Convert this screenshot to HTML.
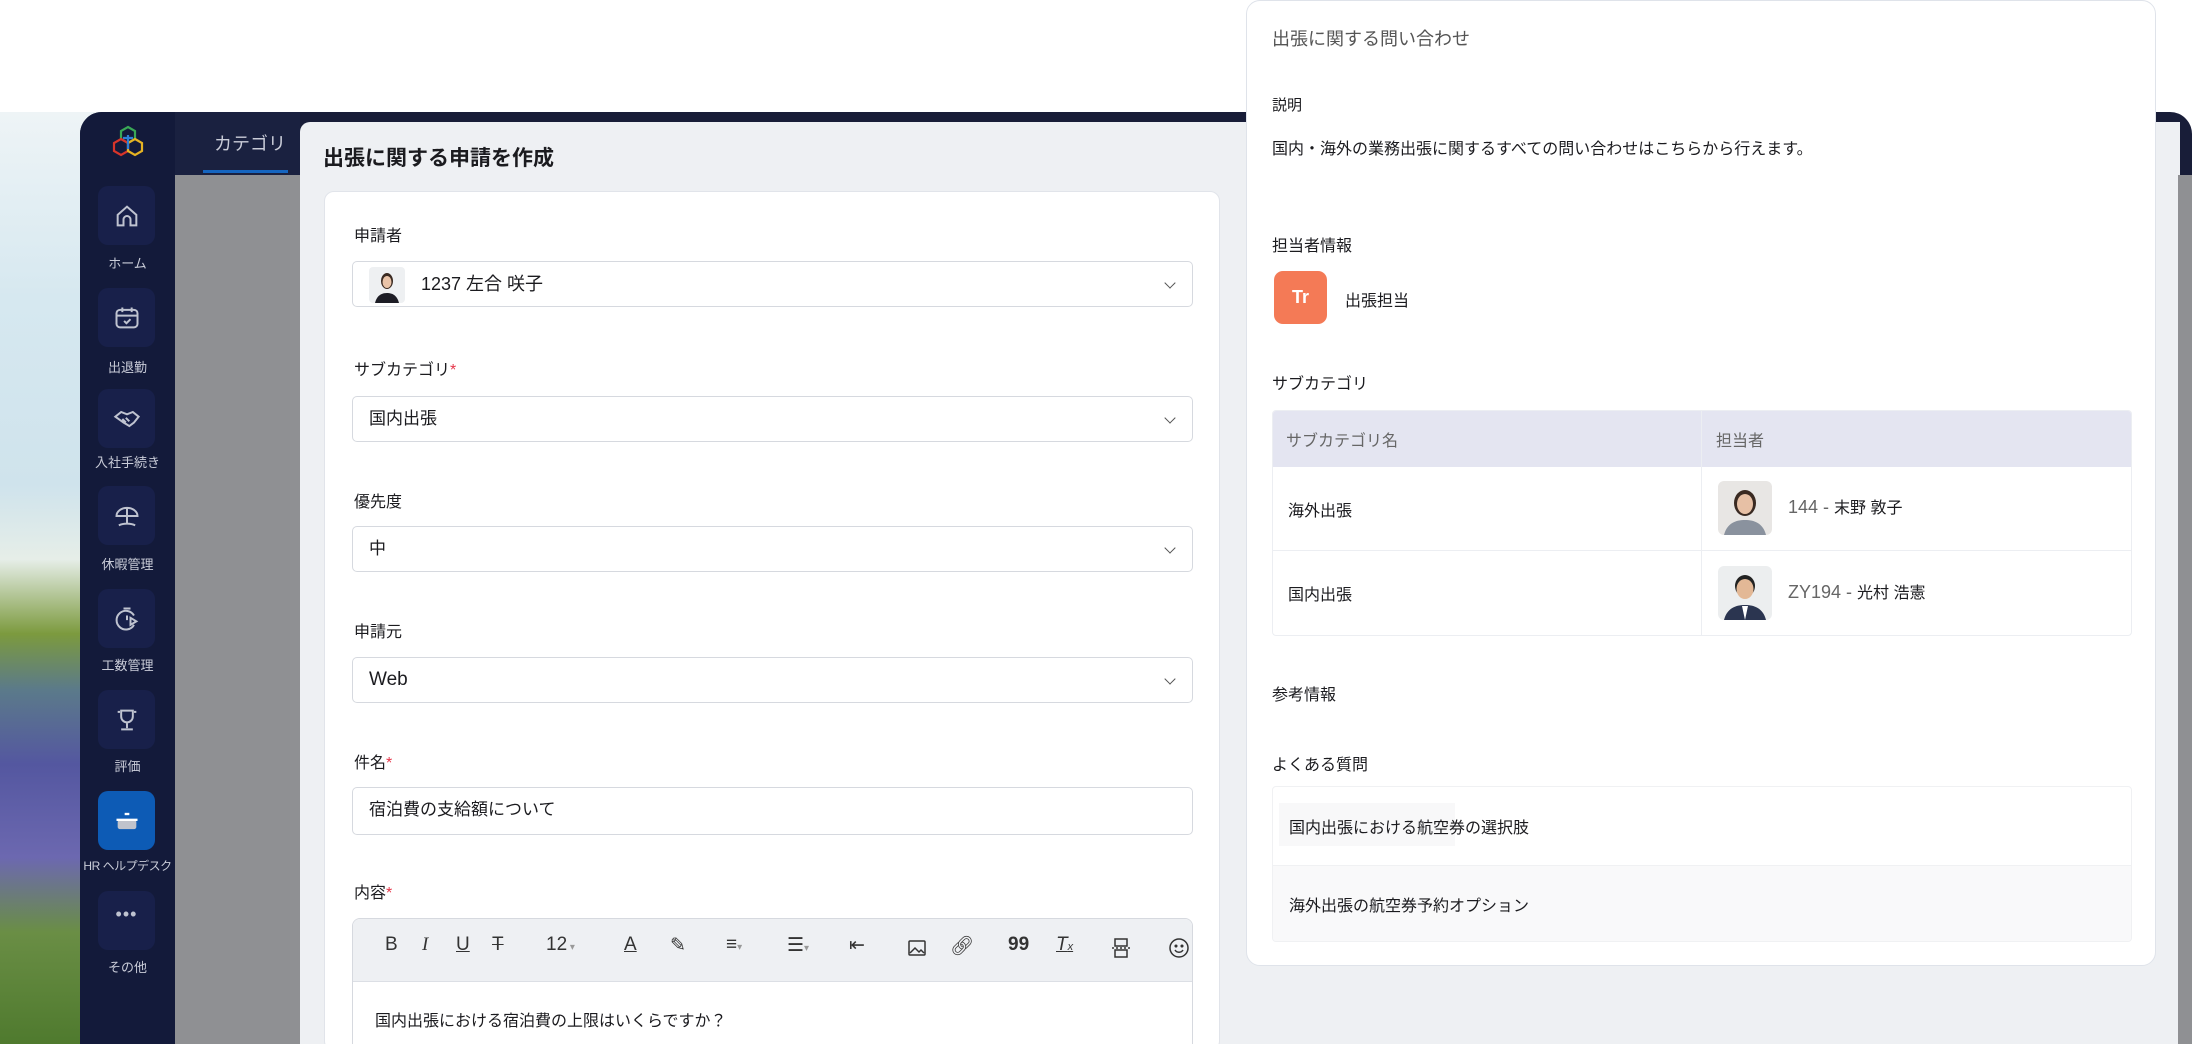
<!DOCTYPE html>
<html><head><meta charset="utf-8">
<style>
*{box-sizing:border-box;margin:0;padding:0}
html{width:2192px;height:1044px;overflow:hidden}
body{width:2192px;height:1044px;overflow:hidden;background:#fff;position:relative;font-family:"Liberation Sans","Noto Sans CJK JP",sans-serif;color:#1b1b1f}
.a{position:absolute}
.bg{left:0;top:112px;width:120px;height:932px;background:linear-gradient(180deg,#eef4f6 0%,#d6e8f0 20%,#cfe3ec 40%,#e6eee8 48%,#7c9a3e 56%,#5b7a8a 62%,#5457a0 70%,#6c68b0 80%,#6a8e45 88%,#4f7a2e 100%)}
.frame{left:80px;top:112px;width:2112px;height:932px;background:#181d38;border-radius:22px 22px 0 0}
.side{left:80px;top:112px;width:95px;height:932px;background:#131a3a;border-radius:22px 0 0 0}
.cat{left:175px;top:112px;width:125px;height:932px;background:#8f9093}
.cathead{left:175px;top:112px;width:125px;height:63px;background:#1a2140}
.main{left:300px;top:122px;width:1880px;height:922px;background:#eef0f3;border-radius:10px 0 0 0}
.rstrip{left:2178px;top:175px;width:14px;height:869px;background:#8f9093}
.ib{width:57px;height:59px;border-radius:10px;background:#18204a;left:98px}
.lb{left:80px;width:95px;text-align:center;font-size:13px;color:#c9ccd8;white-space:nowrap}
.card{left:324px;top:191px;width:896px;height:860px;background:#fff;border:1px solid #e1e4ea;border-radius:10px}
.lab{left:354px;font-size:16px;color:#1b1b1f}
.sel{left:352px;width:841px;height:46px;border:1px solid #d6d9df;border-radius:5px;background:#fff;font-size:17px;padding-left:16px;line-height:44px}
.chev{position:absolute;right:18px;top:17px;width:8px;height:8px;border-right:1.5px solid #555;border-bottom:1.5px solid #555;transform:rotate(45deg)}
.req{color:#e5364a}
.panel{left:1246px;top:0;width:910px;height:966px;background:#fff;border:1px solid #dfe3ea;border-radius:14px}
.pt{left:1272px;font-size:16px;color:#1b1b1f}
.tb{font-size:19px;color:#333;top:934px}
</style></head><body>
<div class="a bg"></div>
<div class="a frame"></div>
<div class="a side"></div>
<div class="a cat"></div>
<div class="a cathead"></div>
<div class="a" style="left:214px;top:130px;font-size:18px;color:#c9ccd8">カテゴリ</div>
<div class="a" style="left:203px;top:170px;width:85px;height:3px;background:#1565c0"></div>
<div class="a main"></div>
<div class="a rstrip"></div>
<svg class="a" style="left:110px;top:124px" width="36" height="36" viewBox="0 0 36 36" fill="none" stroke-width="2.2"><path d="M18 3l7 4v8l-7 4-7-4V7z" stroke="#3aa856"/><path d="M11 15l7 4v8l-7 4-7-4v-8z" stroke="#d8352a"/><path d="M25 15l7 4v8l-7 4-7-4v-8z" stroke="#e6b323"/><path d="M18 11v14M13 14h10" stroke="#2d7fd6"/></svg>
<div class="a ib" style="top:186px"></div>
<svg class="a" style="left:113px;top:202px" width="28" height="28" viewBox="0 0 24 24" fill="none" stroke="#bfc3d0" stroke-width="1.7"><path d="M4 11l8-7 8 7v9h-5v-5a3 3 0 0 0-6 0v5H4z"/></svg>
<div class="a lb" style="top:253px">ホーム</div>
<div class="a ib" style="top:288px"></div>
<svg class="a" style="left:113px;top:304px" width="28" height="28" viewBox="0 0 24 24" fill="none" stroke="#bfc3d0" stroke-width="1.7"><rect x="3" y="5" width="18" height="15" rx="3"/><path d="M8 3v4M16 3v4M3 10h18M9.5 14.5l2 2 3.5-3.5"/></svg>
<div class="a lb" style="top:357px">出退勤</div>
<div class="a ib" style="top:389px"></div>
<svg class="a" style="left:113px;top:405px" width="28" height="28" viewBox="0 0 24 24" fill="none" stroke="#bfc3d0" stroke-width="1.7"><path d="M2 10l5-4 5 2 5-2 5 4-4 5-4 3-5-3zM8 12l3 3M11 11l3 3"/></svg>
<div class="a lb" style="top:452px">入社手続き</div>
<div class="a ib" style="top:486px"></div>
<svg class="a" style="left:113px;top:502px" width="28" height="28" viewBox="0 0 24 24" fill="none" stroke="#bfc3d0" stroke-width="1.7"><path d="M3 12a9 7 0 0 1 18 0zM12 5v13M5 20c4-2 10-2 14 0"/></svg>
<div class="a lb" style="top:554px">休暇管理</div>
<div class="a ib" style="top:589px"></div>
<svg class="a" style="left:113px;top:605px" width="28" height="28" viewBox="0 0 24 24" fill="none" stroke="#bfc3d0" stroke-width="1.7"><path d="M18 9a8 8 0 1 0 0 8M12 9v4M9 3h6M15 11l5 3-5 3z"/></svg>
<div class="a lb" style="top:655px">工数管理</div>
<div class="a ib" style="top:690px"></div>
<svg class="a" style="left:113px;top:706px" width="28" height="28" viewBox="0 0 24 24" fill="none" stroke="#bfc3d0" stroke-width="1.7"><path d="M7 4h10v5a5 5 0 0 1-10 0zM12 14v5M7 20h10M4 5h2M18 5h2"/></svg>
<div class="a lb" style="top:756px">評価</div>
<div class="a ib" style="top:791px;background:#0d5bb5"></div>
<svg class="a" style="left:113px;top:807px" width="28" height="28" viewBox="0 0 24 24"><rect x="4" y="11" width="16" height="8" rx="2" fill="#c0c3cc"/><rect x="3" y="10" width="18" height="2" fill="#fff"/><rect x="10" y="5" width="4" height="2" fill="#fff"/></svg>
<div class="a lb" style="top:857px;font-size:12px;left:78px;width:99px;letter-spacing:-0.5px">HR ヘルプデスク</div>
<div class="a ib" style="top:891px"></div>
<div class="a" style="left:98px;top:904px;width:57px;text-align:center;color:#bfc3d0;font-size:18px;letter-spacing:1px">•••</div>
<div class="a lb" style="top:957px">その他</div>

<div class="a" style="left:323px;top:142px;font-size:21px;font-weight:bold">出張に関する申請を作成</div>
<div class="a card"></div>
<div class="a lab" style="top:222px">申請者</div>
<div class="a sel" style="top:261px;padding-left:68px;font-size:18px">1237 左合 咲子<span class="chev"></span>
<svg style="position:absolute;left:16px;top:5px" width="36" height="36" viewBox="0 0 36 36"><rect width="36" height="36" rx="4" fill="#eef0f2"/><ellipse cx="18" cy="14" rx="6" ry="8" fill="#3a2a22"/><ellipse cx="18" cy="15" rx="4.5" ry="6" fill="#e9c3a8"/><path d="M6 36c2-8 7-10 12-10s10 2 12 10z" fill="#1d1d25"/></svg></div>
<div class="a lab" style="top:356px">サブカテゴリ<span class="req">*</span></div>
<div class="a sel" style="top:396px">国内出張<span class="chev"></span></div>
<div class="a lab" style="top:488px">優先度</div>
<div class="a sel" style="top:526px">中<span class="chev"></span></div>
<div class="a lab" style="top:618px">申請元</div>
<div class="a sel" style="top:657px;font-size:19px">Web<span class="chev"></span></div>
<div class="a lab" style="top:749px">件名<span class="req">*</span></div>
<div class="a sel" style="top:787px;height:48px">宿泊費の支給額について</div>
<div class="a lab" style="top:879px">内容<span class="req">*</span></div>
<div class="a" style="left:352px;top:918px;width:841px;height:140px;border:1px solid #d6d9df;border-radius:8px;background:#fff;overflow:hidden">
<div style="height:63px;background:#eef0f3;border-bottom:1px solid #dcdfe5"></div>
<div style="position:absolute;left:22px;top:88px;font-size:16px">国内出張における宿泊費の上限はいくらですか？</div>
</div>
<div class="a tb" style="left:385px">B</div>
<div class="a tb" style="left:422px;font-style:italic;font-family:'Liberation Serif',serif">I</div>
<div class="a tb" style="left:456px;text-decoration:underline">U</div>
<div class="a tb" style="left:492px;text-decoration:line-through">T</div>
<div class="a tb" style="left:546px">12<span style="font-size:10px;color:#999"> ▾</span></div>
<div class="a tb" style="left:624px;text-decoration:underline">A</div>
<div class="a tb" style="left:670px">✎</div>
<div class="a tb" style="left:726px">≡<span style="font-size:10px;color:#999">▾</span></div>
<div class="a tb" style="left:787px">☰<span style="font-size:10px;color:#999">▾</span></div>
<div class="a tb" style="left:849px">⇤</div>
<svg class="a" style="left:907px;top:938px" width="20" height="20" viewBox="0 0 20 20" fill="none" stroke="#333" stroke-width="1.5"><rect x="2" y="3" width="16" height="14" rx="1"/><path d="M3 15l5-5 4 4 2-2 3 3"/></svg>
<div class="a tb" style="left:950px">🔗︎</div>
<div class="a tb" style="left:1008px;font-weight:bold">99</div>
<div class="a tb" style="left:1056px;font-style:italic;text-decoration:underline">T<span style="font-size:11px">x</span></div>
<svg class="a" style="left:1111px;top:937px" width="20" height="22" viewBox="0 0 20 22" fill="none" stroke="#333" stroke-width="1.5"><rect x="4" y="2" width="12" height="7"/><rect x="4" y="13" width="12" height="7"/><path d="M1 11h18" stroke-dasharray="2 2"/></svg>
<svg class="a" style="left:1168px;top:937px" width="22" height="22" viewBox="0 0 22 22" fill="none" stroke="#333" stroke-width="1.5"><circle cx="11" cy="11" r="9"/><circle cx="8" cy="9" r=".8" fill="#333"/><circle cx="14" cy="9" r=".8" fill="#333"/><path d="M7 13c2 3 6 3 8 0"/></svg>

<div class="a panel"></div>
<div class="a pt" style="top:25px;font-size:18px;color:#555">出張に関する問い合わせ</div>
<div class="a pt" style="top:94px;font-size:15px">説明</div>
<div class="a pt" style="top:135px;font-size:16px">国内・海外の業務出張に関するすべての問い合わせはこちらから行えます。</div>
<div class="a pt" style="top:232px;font-size:16px">担当者情報</div>
<div class="a" style="left:1274px;top:271px;width:53px;height:53px;border-radius:9px;background:#f47a56;color:#fff;font-weight:bold;font-size:18px;text-align:center;line-height:53px">Tr</div>
<div class="a pt" style="left:1345px;top:287px;font-size:16px">出張担当</div>
<div class="a pt" style="top:370px;font-size:16px">サブカテゴリ</div>
<div class="a" style="left:1272px;top:410px;width:860px;height:226px;border:1px solid #eceef2;border-radius:4px;overflow:hidden">
<div style="height:56px;background:#e4e5f1"></div>
<div style="height:84px;border-bottom:1px solid #eceef2"></div>
</div>
<div class="a" style="left:1701px;top:410px;width:1px;height:226px;background:#eceef2"></div>
<div class="a" style="left:1286px;top:427px;font-size:16px;color:#666">サブカテゴリ名</div>
<div class="a" style="left:1716px;top:427px;font-size:16px;color:#666">担当者</div>
<div class="a" style="left:1288px;top:497px;font-size:16px">海外出張</div>
<div class="a" style="left:1288px;top:581px;font-size:16px">国内出張</div>
<svg class="a" style="left:1718px;top:481px" width="54" height="54" viewBox="0 0 54 54"><rect width="54" height="54" rx="6" fill="#e8e6e4"/><ellipse cx="27" cy="22" rx="11" ry="13" fill="#3a2a22"/><ellipse cx="27" cy="23" rx="8" ry="10" fill="#e7c0a5"/><path d="M6 54c3-12 12-15 21-15s18 3 21 15z" fill="#8a929e"/></svg>
<div class="a" style="left:1788px;top:494px;font-size:18px;color:#666">144 - <span style="color:#1b1b1f;font-size:16px">末野 敦子</span></div>
<svg class="a" style="left:1718px;top:566px" width="54" height="54" viewBox="0 0 54 54"><rect width="54" height="54" rx="6" fill="#eceeef"/><ellipse cx="27" cy="20" rx="10" ry="11" fill="#222"/><ellipse cx="27" cy="23" rx="8.5" ry="10" fill="#e3b896"/><path d="M6 54c3-12 12-15 21-15s18 3 21 15z" fill="#2b3550"/><path d="M24 40l3 14 3-14z" fill="#fff"/></svg>
<div class="a" style="left:1788px;top:579px;font-size:18px;color:#666">ZY194 - <span style="color:#1b1b1f;font-size:16px">光村 浩憲</span></div>
<div class="a pt" style="top:681px;font-size:16px">参考情報</div>
<div class="a pt" style="top:751px;font-size:16px">よくある質問</div>
<div class="a" style="left:1272px;top:786px;width:860px;height:156px;border:1px solid #f0f1f3;border-radius:4px;overflow:hidden;background:#fff">
<div style="position:absolute;left:6px;top:16px;width:176px;height:43px;background:#f8f8f9"></div>
<div style="position:absolute;left:0;top:78px;width:860px;height:78px;background:#f9f9fa;border-top:1px solid #f0f1f3"></div>
</div>
<div class="a" style="left:1289px;top:814px;font-size:16px">国内出張における航空券の選択肢</div>
<div class="a" style="left:1289px;top:892px;font-size:16px">海外出張の航空券予約オプション</div>
</body></html>
